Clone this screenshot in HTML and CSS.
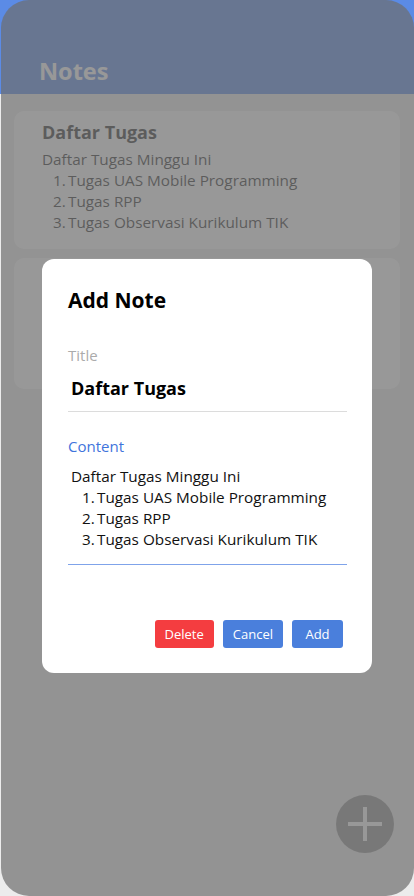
FILE: index.html
```html
<!DOCTYPE html>
<html lang="id">
<head>
<meta charset="utf-8">
<meta name="viewport" content="width=device-width, initial-scale=1">
<title>Notes</title>
<link rel="stylesheet" href="styles.css">
</head>
<body>
  <div class="app">
    <header class="app-header">
      <h1 class="app-title">Notes</h1>
    </header>
    <main class="note-list">
      <article class="note-card">
        <h2 class="note-title">Daftar Tugas</h2>
        <div class="note-body">
          <p class="line">Daftar Tugas Minggu Ini</p>
          <p class="line item"><span class="num">1.</span>Tugas UAS Mobile Programming</p>
          <p class="line item"><span class="num">2.</span>Tugas RPP</p>
          <p class="line item"><span class="num">3.</span>Tugas Observasi Kurikulum TIK</p>
        </div>
      </article>
      <article class="note-card note-card--second"></article>
    </main>
    <button class="fab" aria-label="Add note">
      <svg width="36" height="36" viewBox="0 0 36 36" aria-hidden="true">
        <path d="M18 1v34M1 18h34" stroke="#ffffff" stroke-width="4" fill="none"/>
      </svg>
    </button>
  </div>

  <div class="backdrop">
    <div class="dialog">
      <h2 class="dialog-title">Add Note</h2>
      <div class="field field--title">
        <div class="field-label">Title</div>
        <div class="field-value field-value--title">Daftar Tugas</div>
      </div>
      <div class="field field--content">
        <div class="field-label field-label--active">Content</div>
        <div class="field-value field-value--content">
          <p class="line">Daftar Tugas Minggu Ini</p>
          <p class="line item"><span class="num">1.</span>Tugas UAS Mobile Programming</p>
          <p class="line item"><span class="num">2.</span>Tugas RPP</p>
          <p class="line item"><span class="num">3.</span>Tugas Observasi Kurikulum TIK</p>
        </div>
      </div>
      <div class="dialog-actions">
        <button class="btn btn--danger">Delete</button>
        <button class="btn btn--primary">Cancel</button>
        <button class="btn btn--primary">Add</button>
      </div>
    </div>
  </div>
</body>
</html>
```

FILE: styles.css
```css
* {
  box-sizing: border-box;
}

html, body {
  margin: 0;
  padding: 0;
}

body {
  width: 414px;
  height: 896px;
  overflow: hidden;
  position: relative;
  background: #e8e8e8;
  font-family: "Open Sans", "Noto Sans", sans-serif;
  color: #333333;
}

.app {
  position: relative;
  width: 414px;
  height: 896px;
  display: flex;
  flex-direction: column;
  background: #ececec;
}

.app-header {
  height: 94px;
  flex: 0 0 94px;
  background: #5b8be6;
  display: flex;
  align-items: flex-end;
  padding: 0 0 7px 39px;
}

.app-title {
  margin: 0;
  font-size: 23.5px;
  line-height: 32px;
  font-weight: 700;
  color: #ffffff;
}

.note-list {
  display: flex;
  flex-direction: column;
  gap: 9px;
  padding: 17px 14px 0;
}

.note-card {
  background: #ffffff;
  border-radius: 10px;
  padding: 9px 28px 16px;
}

.note-card--second {
  min-height: 131px;
}

.note-title {
  margin: 0 0 5px;
  font-size: 18px;
  line-height: 24px;
  font-weight: 700;
  color: #333333;
}

.line {
  margin: 0;
  font-size: 15.3px;
  line-height: 21px;
  white-space: nowrap;
}

.item {
  padding-left: 11px;
}

.num {
  display: inline-block;
  width: 15px;
}

.fab {
  position: absolute;
  right: 20px;
  bottom: 43px;
  width: 58px;
  height: 58px;
  border-radius: 50%;
  border: none;
  padding: 0;
  background: #929292;
  display: flex;
  align-items: center;
  justify-content: center;
}

.backdrop {
  position: absolute;
  top: 0;
  left: 1px;
  right: 0;
  bottom: 0;
  border-radius: 28px;
  background: rgba(110, 110, 110, 0.71);
  display: flex;
  justify-content: center;
  align-items: flex-start;
  padding-top: 259px;
  padding-right: 1px;
}

.dialog {
  width: 330px;
  background: #ffffff;
  border-radius: 12px;
  padding: 27px 25px 25px 26px;
  color: #111111;
}

.dialog-title {
  margin: 0;
  font-size: 21px;
  line-height: 28px;
  font-weight: 700;
  color: #000000;
}

.field--title {
  margin-top: 31px;
  padding-bottom: 11px;
  border-bottom: 1px solid #dcdcdc;
}

.field--content {
  margin-top: 24px;
  padding-bottom: 14px;
  border-bottom: 1px solid #7fa3ea;
}

.field-label {
  font-size: 15px;
  line-height: 21px;
  color: #ababab;
}

.field-label--active {
  color: #3f74dc;
}

.field-value {
  padding-left: 3px;
}

.field-value--title {
  margin-top: 10px;
  font-size: 18px;
  line-height: 24px;
  font-weight: 700;
  color: #000000;
}

.field-value--content {
  margin-top: 9px;
  color: #111111;
}

.dialog-actions {
  margin-top: 55px;
  display: flex;
  justify-content: flex-end;
  gap: 9px;
  padding-right: 4px;
}

.btn {
  height: 28px;
  min-width: 51px;
  padding: 0 10px;
  border: none;
  border-radius: 3px;
  font-family: "Open Sans", "Noto Sans", sans-serif;
  font-size: 13px;
  line-height: 28px;
  color: #ffffff;
  text-align: center;
}

.btn--danger {
  background: #f43d40;
}

.btn--primary {
  background: #4a7fdc;
}
```
